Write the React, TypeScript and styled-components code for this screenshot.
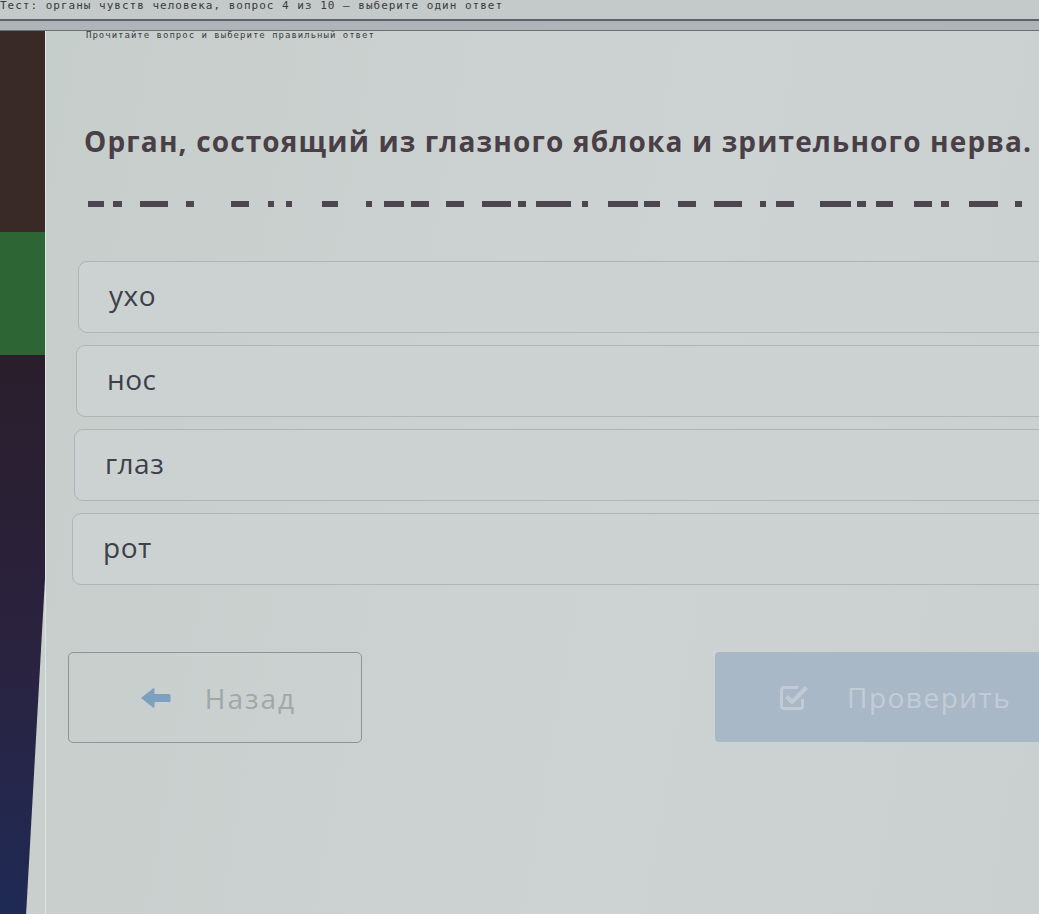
import styled, { createGlobalStyle } from "styled-components";

const GlobalStyle = createGlobalStyle`
  html, body {
    margin: 0;
    padding: 0;
    background: #c8cfcd;
    overflow: hidden;
  }
  * {
    box-sizing: border-box;
  }
`;

const options = ["ухо", "нос", "глаз", "рот"];

// куски пунктирной строки под вопросом: [начало, конец] от левого края поля
const dashes: [number, number][] = [
  [0, 16], [25, 34], [52, 80], [98, 106], [143, 161], [180, 186], [198, 204],
  [234, 250], [278, 284], [296, 316], [323, 341], [358, 376], [394, 423],
  [430, 438], [448, 483], [494, 500], [520, 550], [556, 572], [590, 608],
  [626, 654], [672, 678], [688, 706], [732, 763], [769, 778], [788, 805],
  [826, 844], [853, 861], [881, 910], [927, 934],
];

const ArrowLeft = () => (
  <svg width="31" height="22" viewBox="0 0 31 22">
    <path
      d="M1 11 L13 1.5 Q14.5 0.5 14.5 2.5 L14.5 7 L29 7 Q30.5 7 30.5 8.5 L30.5 13.5 Q30.5 15 29 15 L14.5 15 L14.5 19.5 Q14.5 21.5 13 20.5 Z"
      fill="#7d9fc0"
    />
  </svg>
);

// квадрат с галочкой, галочка выходит за верхний правый угол
const CheckSquare = () => (
  <svg width="30" height="28" viewBox="0 0 30 28">
    <path
      d="M19 4.5 H5 Q2.5 4.5 2.5 7 V23 Q2.5 25.5 5 25.5 H21 Q23.5 25.5 23.5 23 V16"
      fill="none"
      stroke="#c2cbd5"
      strokeWidth="3"
    />
    <path d="M7.5 13.5 L13 19 L27.5 4.5" fill="none" stroke="#c2cbd5" strokeWidth="4" />
  </svg>
);

const App = () => {
  return (
    <>
      <GlobalStyle />
      <Page>
        <TopStrip>
          <CutText>Тест: органы чувств человека, вопрос 4 из 10 — выберите один ответ</CutText>
        </TopStrip>
        <Band />
        <Body>
          <Sidebar>
            <SideBlock $color="#3a2a27" $height={201} />
            <SideBlock $color="#2d6634" $height={123} />
            <SideBlock $color="linear-gradient(#2a1e2b, #2a2340 55%, #1f2a55)" $height={560} />
          </Sidebar>
          <Main>
            <ScrolledLine>Прочитайте вопрос и выберите правильный ответ</ScrolledLine>
            <Question>Орган, состоящий из глазного яблока и зрительного нерва.</Question>
            <DashLine width="940" height="6" viewBox="0 0 940 6">
              {dashes.map(([a, b]) => (
                <rect key={a} x={a} y={0} width={b - a} height={6} fill="#4d4650" />
              ))}
            </DashLine>
            <OptionList>
              {options.map((option, i) => (
                <Option key={option} $shift={i * 2}>
                  {option}
                </Option>
              ))}
            </OptionList>
            <ButtonRow>
              <BackButton>
                <ArrowLeft />
                <span>Назад</span>
              </BackButton>
              <CheckButton>
                <CheckSquare />
                <span>Проверить</span>
              </CheckButton>
            </ButtonRow>
          </Main>
        </Body>
      </Page>
    </>
  );
};

const Page = styled.div`
  display: flex;
  flex-direction: column;
  width: 100vw;
  height: 100vh;
  overflow: hidden;
`;

const TopStrip = styled.div`
  height: 19px;
  background: #c4c9c9;
`;

const CutText = styled.div`
  font-family: "DejaVu Sans Mono", monospace;
  font-size: 11px;
  line-height: 11px;
  color: #3a3a3e;
  white-space: nowrap;
  letter-spacing: 1px;
`;

const Band = styled.div`
  height: 12px;
  background: #aeb4b8;
  border-top: 2px solid #5e6266;
  border-bottom: 1px solid #6c7074;
`;

const Body = styled.div`
  flex: 1;
  display: flex;
  min-height: 0;
`;

const Sidebar = styled.div`
  width: 45px;
  flex-shrink: 0;
  display: flex;
  flex-direction: column;
  clip-path: polygon(0 0, 100% 0, 100% 62%, 58% 100%, 0 100%);
`;

const SideBlock = styled.div<{ $color: string; $height: number }>`
  height: ${(props) => props.$height}px;
  flex-shrink: 0;
  background: ${(props) => props.$color};
`;

const Main = styled.div`
  flex: 1;
  min-width: 0;
  display: flex;
  flex-direction: column;
  background: linear-gradient(100deg, #c6cecc, #cdd3d2 60%, #c9d0cf);
  border-left: 1px solid #dfe4e3;
`;

const ScrolledLine = styled.div`
  height: 10px;
  padding-left: 40px;
  font-family: "DejaVu Sans Mono", monospace;
  font-size: 9px;
  line-height: 9px;
  color: #3d3d42;
  white-space: nowrap;
  letter-spacing: 1px;
`;

const Question = styled.h1`
  margin: 82px 0 0 38px;
  font-family: "Open Sans", "Noto Sans", sans-serif;
  font-weight: 700;
  font-size: 28px;
  line-height: 36px;
  letter-spacing: 1.15px;
  color: #4a3f47;
  white-space: nowrap;
`;

const DashLine = styled.svg`
  display: block;
  margin: 42px 0 0 42px;
`;

const OptionList = styled.div`
  display: flex;
  flex-direction: column;
  gap: 12px;
  margin: 54px -30px 0 32px;
`;

const Option = styled.div<{ $shift: number }>`
  height: 72px;
  display: flex;
  align-items: center;
  margin-left: -${(props) => props.$shift}px;
  padding: 0 0 4px 30px;
  border: 1px solid #aeb5b7;
  border-radius: 9px;
  background: #cbd2d1;
  font-family: "Open Sans", "Noto Sans", sans-serif;
  font-size: 28px;
  letter-spacing: 0.5px;
  color: #3d3f49;
`;

const ButtonRow = styled.div`
  display: flex;
  justify-content: space-between;
  align-items: flex-start;
  margin: 67px -40px 0 22px;
`;

const BackButton = styled.div`
  width: 294px;
  height: 91px;
  display: flex;
  align-items: center;
  justify-content: center;
  gap: 34px;
  padding-left: 6px;
  border: 1px solid #8e9596;
  border-radius: 5px;
  font-family: "Open Sans", "Noto Sans", sans-serif;
  font-size: 28px;
  letter-spacing: 2px;
  color: #a0a7aa;
`;

const CheckButton = styled.div`
  width: 364px;
  height: 90px;
  display: flex;
  align-items: center;
  gap: 38px;
  padding-left: 64px;
  border-radius: 4px;
  background: #a9b8c6;
  font-family: "Open Sans", "Noto Sans", sans-serif;
  font-size: 28px;
  letter-spacing: 1.5px;
  color: #c3ccd6;
`;

export default App;
